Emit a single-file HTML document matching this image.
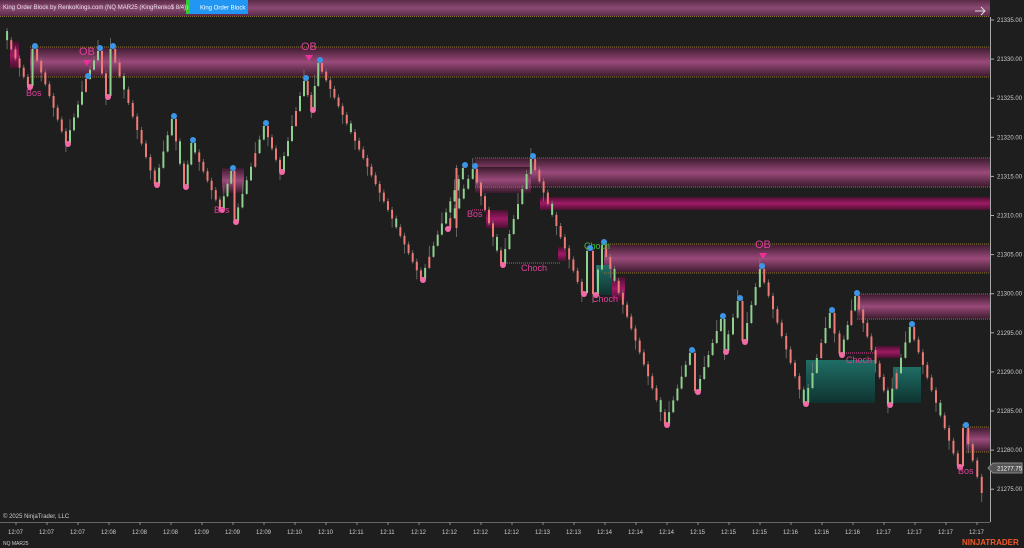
<!DOCTYPE html>
<html><head><meta charset="utf-8"><style>
html,body{margin:0;padding:0;background:#1e1e1e;width:1024px;height:548px;overflow:hidden;font-family:"Liberation Sans",sans-serif}
</style></head><body>
<svg id="s" width="1024" height="548" xmlns="http://www.w3.org/2000/svg" style="position:absolute;left:0;top:0">
<defs>
<linearGradient id="ob" x1="0" y1="0" x2="0" y2="1">
<stop offset="0" stop-color="#3a1a2c"/><stop offset="0.5" stop-color="#9a4a7a"/><stop offset="1" stop-color="#3a1a2c"/></linearGradient>
<linearGradient id="mg" x1="0" y1="0" x2="0" y2="1">
<stop offset="0" stop-color="#4a1030"/><stop offset="0.5" stop-color="#a01a66"/><stop offset="1" stop-color="#4a1030"/></linearGradient>
<linearGradient id="tl" x1="0" y1="0" x2="0" y2="1">
<stop offset="0" stop-color="#1f6e66"/><stop offset="1" stop-color="#0f3330"/></linearGradient>
<linearGradient id="tb" x1="0" y1="0" x2="0" y2="1">
<stop offset="0" stop-color="#5a2a48"/><stop offset="0.5" stop-color="#8a4a72"/><stop offset="1" stop-color="#5a2a48"/></linearGradient>
</defs>
<rect x="0" y="0" width="990" height="16" fill="url(#tb)"/>
<rect x="186" y="0" width="4" height="14" fill="#2ecc2e"/>
<rect x="190" y="0" width="58" height="14" fill="#2196f3"/>
<text x="3" y="9" font-size="6" fill="#e8e0e8">King Order Block by RenkoKings.com (NQ MAR25 (KingRenko$ 8/4))</text>
<text x="200" y="9.5" font-size="6" fill="#fff">King Order Block</text>
<line x1="0" y1="16.5" x2="990" y2="16.5" stroke="#8a7a30" stroke-dasharray="1,1"/>
<path d="M975 11h10M981 7l4 4-4 4" stroke="#ddd" fill="none" stroke-width="1"/>
<g id="zones">
<rect x="30" y="47" width="960" height="30" fill="url(#ob)"/>
<rect x="475" y="158" width="515" height="29" fill="url(#ob)"/>
<rect x="475" y="167" width="56" height="26" fill="url(#ob)"/>
<rect x="540" y="197" width="450" height="13" fill="url(#mg)"/>
<rect x="604" y="244" width="386" height="29" fill="url(#ob)"/>
<rect x="857" y="294" width="133" height="25" fill="url(#ob)"/>
<rect x="966" y="427" width="24" height="25" fill="url(#ob)"/>
<rect x="222" y="168" width="22" height="25" fill="url(#ob)"/>
<rect x="10" y="42" width="9" height="26" fill="url(#mg)"/>
<rect x="486" y="210" width="22" height="18" fill="url(#mg)"/>
<rect x="612" y="277" width="13" height="23" fill="url(#mg)"/>
<rect x="875" y="346" width="25" height="12" fill="url(#mg)"/>
<rect x="558" y="247" width="8" height="14" fill="url(#mg)"/>
<rect x="806" y="360" width="69" height="43" fill="url(#tl)"/>
<rect x="893" y="367" width="28" height="36" fill="url(#tl)"/>
<rect x="596" y="265" width="16" height="30" fill="url(#tl)"/>
<g stroke="#8a7a30" stroke-dasharray="1,1" fill="none">
<line x1="30" y1="47" x2="990" y2="47"/><line x1="30" y1="77" x2="990" y2="77"/>
<line x1="475" y1="158" x2="990" y2="158"/><line x1="475" y1="187" x2="990" y2="187"/>
<line x1="604" y1="244" x2="990" y2="244"/><line x1="604" y1="273" x2="990" y2="273"/>
<line x1="857" y1="294" x2="990" y2="294"/><line x1="857" y1="319" x2="990" y2="319"/>
<line x1="966" y1="427" x2="990" y2="427"/><line x1="966" y1="452" x2="990" y2="452"/>
</g>
<g stroke="#e0409a" stroke-dasharray="1,1">
<line x1="503" y1="263" x2="560" y2="263"/><line x1="842" y1="353" x2="875" y2="353"/>
<line x1="472" y1="210" x2="486" y2="210"/>
</g>
</g>
<g id="c"></g>
<g font-size="9" fill="#e0409a">
<text x="79" y="55" font-size="11">OB</text><text x="301" y="50" font-size="11">OB</text><text x="755" y="248" font-size="11">OB</text>
<text x="26" y="96">Bos</text><text x="214" y="213">Bos</text><text x="467" y="217">Bos</text><text x="958" y="474">Bos</text>
<text x="521" y="271">Choch</text><text x="592" y="302">Choch</text><text x="846" y="363">Choch</text>
<text x="584" y="249" fill="#3ac03a">Choch</text>
</g>
<g fill="#ee2e9a"><path d="M83 60h8l-4 6z"/><path d="M305 55h8l-4 6z"/><path d="M759 253h8l-4 6z"/></g>
<line x1="990.5" y1="17" x2="990.5" y2="522" stroke="#aaa"/>
<line x1="0" y1="522.5" x2="990" y2="522.5" stroke="#666"/>
<g id="ax" font-size="6" fill="#ccc"></g>
<path d="M988 468l5-5h29v10h-29z" fill="#555" stroke="#888"/>
<text x="997" y="470.5" font-size="6" fill="#fff">21277.75</text>
<text x="3" y="518" font-size="6" fill="#ccc">© 2025 NinjaTrader, LLC</text>
<text x="3" y="545" font-size="5" fill="#ccc">NQ MAR25</text>
<text x="962" y="545" font-size="8" font-weight="bold" fill="#f05a28">NINJATRADER</text>
</svg>
<script>
(function(){
var NS="http://www.w3.org/2000/svg";
function el(p,t,a){var e=document.createElementNS(NS,t);for(var k in a)e.setAttribute(k,a[k]);p.appendChild(e);return e;}
var ax=document.getElementById('ax');
for(var i=0;i<13;i++){var p=21335-5*i;var y=20+i*39.1;el(ax,'line',{x1:990,y1:y,x2:994,y2:y,stroke:'#aaa'});var t=el(ax,'text',{x:997,y:y+2});t.textContent=p.toFixed(2);}
var tl=['12:07','12:07','12:07','12:08','12:08','12:08','12:09','12:09','12:09','12:10','12:10','12:11','12:11','12:12','12:12','12:12','12:12','12:13','12:13','12:14','12:14','12:14','12:15','12:15','12:15','12:16','12:16','12:16','12:17','12:17','12:17','12:17'];
for(var i=0;i<32;i++){var x=16+i*31;if(x>985)break;el(ax,'line',{x1:x,y1:522,x2:x,y2:525,stroke:'#888'});var t=el(ax,'text',{x:x-8,y:534});t.textContent=tl[i];}
var P=[[5,30],[30,85],[35,48],[68,142],[88,78],[100,50],[108,95],[113,48],[157,183],[174,118],[186,185],[193,142],[222,208],[233,170],[236,220],[266,125],[282,170],[306,80],[313,108],[320,62],[423,278],[465,167],[448,227],[475,168],[503,263],[533,158],[584,292],[590,250],[596,293],[604,244],[667,423],[692,352],[698,390],[723,318],[726,350],[740,300],[745,340],[762,268],[806,402],[832,312],[842,353],[857,295],[890,403],[912,326],[960,465],[966,427],[984,492]];
var g=document.getElementById('c');
for(var i=0;i<P.length-1;i++){var a=P[i],b=P[i+1];var dx=b[0]-a[0];if(dx<=0)dx=3;var n=Math.max(1,Math.round(Math.abs(dx)/4.2));var up=b[1]<a[1];
for(var j=0;j<n;j++){var x=a[0]+(b[0]-a[0])*(j+0.5)/n;var y0=a[1]+(b[1]-a[1])*j/n,y1=a[1]+(b[1]-a[1])*(j+1)/n;var ty=Math.min(y0,y1),h=Math.max(3,Math.abs(y1-y0));
var col=up?'#8fd08f':'#ef7a76';if((i*7+j*3)%11==0)col=up?'#ef7a76':'#8fd08f';
var wk=((i+j)%3==0)?10:3;
el(g,'line',{x1:x,y1:ty-(up?wk:2),x2:x,y2:ty+h+(up?2:wk),stroke:'#777','stroke-width':0.8});
el(g,'rect',{x:x-1,y:ty+1,width:2,height:h,fill:col});}}
for(var i=1;i<P.length-1;i++){var pk=P[i][1]<P[i-1][1];el(g,'circle',{cx:P[i][0],cy:P[i][1]+(pk?-2:2),r:3,fill:pk?'#3b96e8':'#f36aa8'});}
})();
</script>
</body></html>
